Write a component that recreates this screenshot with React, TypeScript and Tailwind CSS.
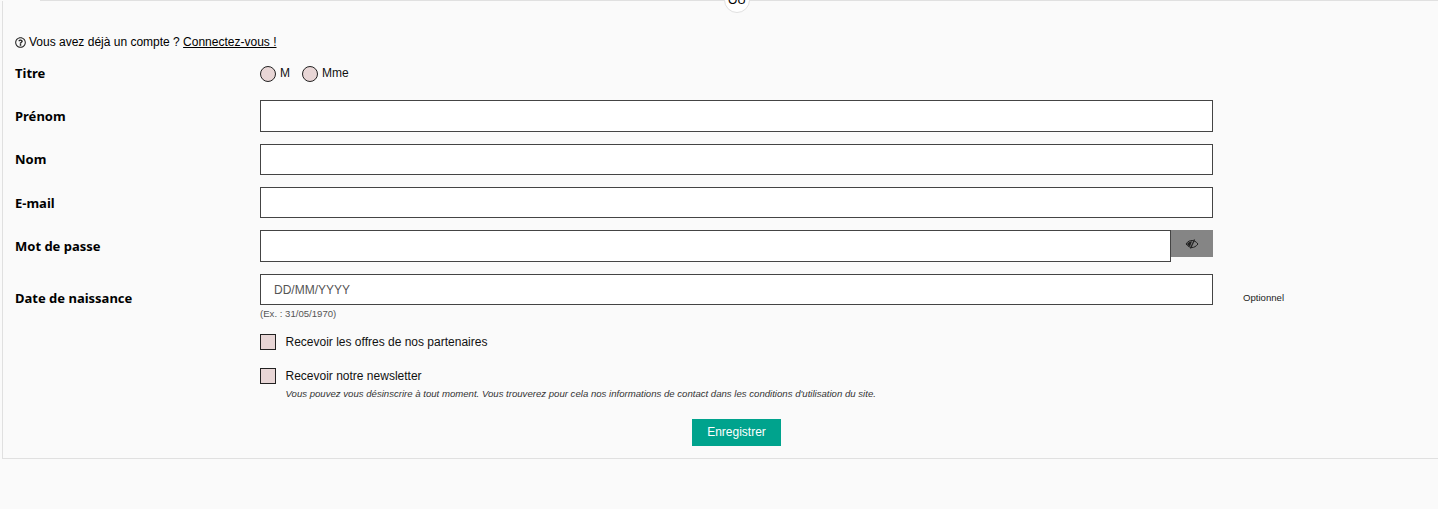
import { FaRegQuestionCircle } from 'react-icons/fa';

const arial = "font-['Liberation_Sans',Arial,sans-serif]";

function EyeSlash() {
  return (
    <svg viewBox="0 0 14 10" className="h-[10px] w-[14px]" fill="none" stroke="currentColor">
      <path d="M1 5 C3 2 5 1.5 7 1.5 C9 1.5 11 2.5 13 5 C11 7.5 9 8.5 7 8.5 C5 8.5 3 7.5 1 5 Z" strokeWidth="1" />
      <path d="M2 5 C3.5 3 5 2.2 7 2.2 L5 7.6 C4 7.2 3 6.4 2 5 Z" fill="currentColor" stroke="none" />
      <path d="M9.5 0.5 L5.5 9.5" strokeWidth="1.2" />
    </svg>
  );
}

function FieldRow({
  label,
  children,
  className,
  labelClass = 'mt-[2px]',
}: {
  label: string;
  children: React.ReactNode;
  className: string;
  labelClass?: string;
}) {
  return (
    <div className={`flex items-center ${className}`}>
      <label className={`w-[245px] shrink-0 font-['Noto_Sans',sans-serif] text-[13px] font-bold text-black ${labelClass}`}>{label}</label>
      {children}
    </div>
  );
}

export default function App() {
  return (
    <div className={`relative h-[509px] w-full overflow-hidden bg-[#fafafa] ${arial}`}>
      {/* séparateur "OU" coupé en haut de page */}
      <div className="ml-[40px] h-px bg-[#e0e0e0]" />
      <div className="absolute left-[724px] top-[-13px] flex h-[26px] w-[26px] items-center justify-center rounded-full border border-[#e0e0e0] bg-white text-[12px] text-black">
        OU
      </div>

      <div className="ml-[2px] h-[458px] border-b border-l border-[#e0e0e0] pl-[12px]">
        <p className="flex items-center pt-[34px] text-[12px] leading-[14px] text-black">
          <FaRegQuestionCircle className="mr-[3px] h-[11px] w-[11px] text-[#222]" />
          Vous avez déjà un compte ?&nbsp;
          <a href="#" className="underline">Connectez-vous !</a>
        </p>

        <FieldRow label="Titre" className="mt-[12px] h-[24px]">
          <div className="mt-[2px] flex items-center text-[12px] text-[#111]">
            <span className="h-[16px] w-[16px] rounded-full border border-[#222] bg-[#e8d6d6]" />
            <span className="ml-[4px] mr-[12px] -translate-y-px">M</span>
            <span className="h-[16px] w-[16px] rounded-full border border-[#222] bg-[#e8d6d6]" />
            <span className="ml-[4px] -translate-y-px">Mme</span>
          </div>
        </FieldRow>

        <FieldRow label="Prénom" className="mt-[15px] h-[32px]">
          <input className="h-[32px] w-[953px] border border-[#444] bg-white" />
        </FieldRow>
        <FieldRow label="Nom" labelClass="mt-0" className="mt-[12px] h-[31px]">
          <input className="h-[31px] w-[953px] border border-[#444] bg-white" />
        </FieldRow>
        <FieldRow label="E-mail" className="mt-[12px] h-[31px]">
          <input className="h-[31px] w-[953px] border border-[#444] bg-white" />
        </FieldRow>
        <FieldRow label="Mot de passe" className="mt-[12px] h-[32px]">
          <div className="flex h-[32px] w-[953px] items-start">
            <input className="h-[32px] w-[911px] border border-[#444] bg-white" />
            <button className="flex h-[27px] w-[42px] items-center justify-center bg-[#858585] text-[#222]">
              <EyeSlash />
            </button>
          </div>
        </FieldRow>
        <FieldRow label="Date de naissance" labelClass="mt-[4px]" className="mt-[12px] h-[45px]">
          <div className="w-[953px] shrink-0">
            <input
              placeholder="DD/MM/YYYY"
              className="h-[31px] w-full border border-[#444] bg-white px-[13px] text-[12px] placeholder:text-[#555]"
            />
            <p className="mt-[3px] text-[9.6px] leading-[11px] text-[#555]">(Ex. : 31/05/1970)</p>
          </div>
          <span className="ml-[30px] mt-[2px] text-[9.6px] leading-[11px] text-[#222]">Optionnel</span>
        </FieldRow>

        <div className="ml-[245px]">
          <div className="mt-[15px] flex h-[16px] items-center text-[12px] text-[#111]">
            <span className="h-[16px] w-[16px] border border-[#222] bg-[#e8d6d6]" />
            <span className="ml-[9.5px]">Recevoir les offres de nos partenaires</span>
          </div>
          <div className="mt-[18px] flex h-[16px] items-center text-[12px] text-[#111]">
            <span className="h-[16px] w-[16px] border border-[#222] bg-[#e8d6d6]" />
            <span className="ml-[9.5px]">Recevoir notre newsletter</span>
          </div>
          <p className="ml-[25.5px] mt-[4px] text-[9.6px] italic leading-[11px] text-[#333]">
            Vous pouvez vous désinscrire à tout moment. Vous trouverez pour cela nos informations de contact dans les conditions d'utilisation du site.
          </p>
        </div>

        <div className="mt-[20px] flex justify-center pl-[19px]">
          <button className="h-[27px] w-[89px] bg-[#00a38d] pb-[2px] pl-[1px] text-[12px] text-white">Enregistrer</button>
        </div>
      </div>
    </div>
  );
}
